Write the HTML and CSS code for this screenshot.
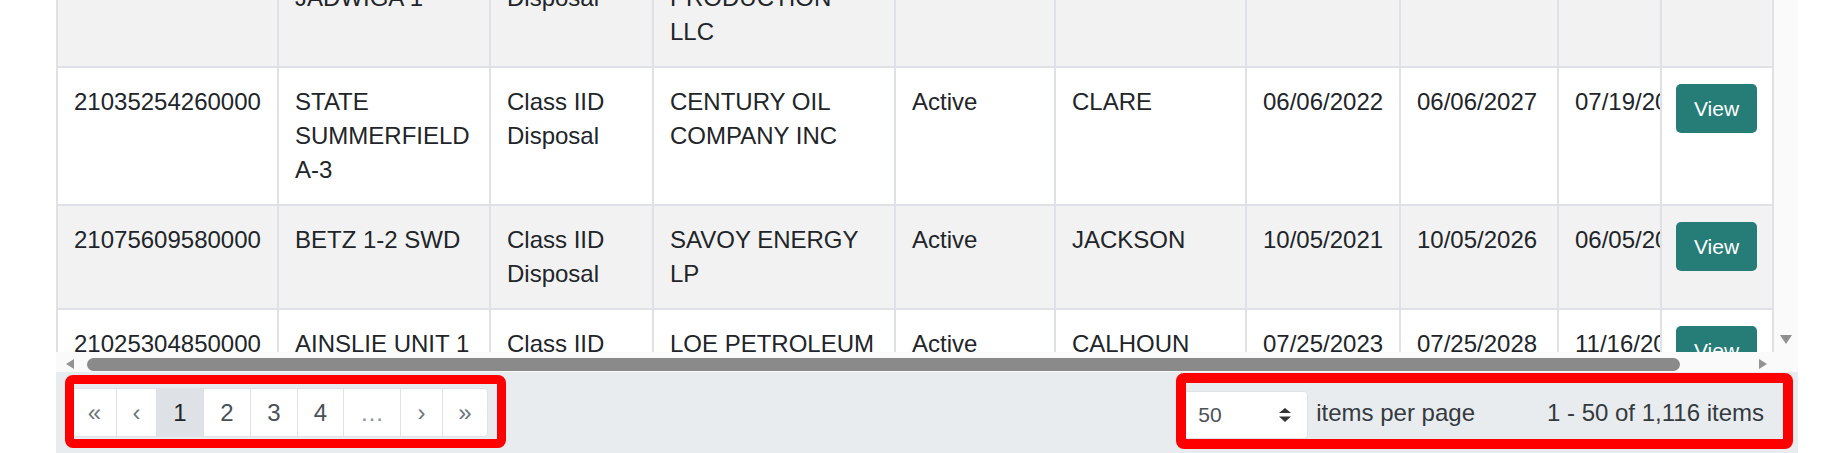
FILE: index.html
```html
<!DOCTYPE html>
<html lang="en">
<head>
<meta charset="utf-8">
<title>Wells</title>
<link rel="stylesheet" href="styles.css">
</head>
<body>
<div class="grid">
  <div class="grid-body">
    <div class="viewport">
      <div class="table">
        <div class="cell alt">21009509990000</div>
        <div class="cell alt">MAJEWSKI JADWIGA 1</div>
        <div class="cell alt">Class IID Disposal</div>
        <div class="cell alt">GRAND RIVER PRODUCTION LLC</div>
        <div class="cell alt">Active</div>
        <div class="cell alt">MANISTEE</div>
        <div class="cell alt">03/14/2022</div>
        <div class="cell alt">03/14/2027</div>
        <div class="cell alt clip">05/02/2023</div>
        <div class="cell alt cmd"><button class="btn-view" type="button">View</button></div>

        <div class="cell">21035254260000</div>
        <div class="cell">STATE SUMMERFIELD A-3</div>
        <div class="cell">Class IID Disposal</div>
        <div class="cell">CENTURY OIL COMPANY INC</div>
        <div class="cell">Active</div>
        <div class="cell">CLARE</div>
        <div class="cell">06/06/2022</div>
        <div class="cell">06/06/2027</div>
        <div class="cell clip">07/19/2023</div>
        <div class="cell cmd"><button class="btn-view" type="button">View</button></div>

        <div class="cell alt">21075609580000</div>
        <div class="cell alt">BETZ 1-2 SWD</div>
        <div class="cell alt">Class IID Disposal</div>
        <div class="cell alt">SAVOY ENERGY LP</div>
        <div class="cell alt">Active</div>
        <div class="cell alt">JACKSON</div>
        <div class="cell alt">10/05/2021</div>
        <div class="cell alt">10/05/2026</div>
        <div class="cell alt clip">06/05/2023</div>
        <div class="cell alt cmd"><button class="btn-view" type="button">View</button></div>

        <div class="cell">21025304850000</div>
        <div class="cell">AINSLIE UNIT 1</div>
        <div class="cell">Class IID Disposal</div>
        <div class="cell">LOE PETROLEUM CORPORATION</div>
        <div class="cell">Active</div>
        <div class="cell">CALHOUN</div>
        <div class="cell">07/25/2023</div>
        <div class="cell">07/25/2028</div>
        <div class="cell clip">11/16/2023</div>
        <div class="cell cmd"><button class="btn-view" type="button">View</button></div>
      </div>
    </div>
    <div class="vscroll"><span class="arrow-down"></span></div>
  </div>
  <div class="hscroll">
    <span class="hs-left"></span>
    <span class="hs-thumb"></span>
    <span class="hs-fill"></span>
    <span class="hs-right"></span>
    <span class="hs-corner"></span>
  </div>
  <div class="pager">
    <div class="pages">
      <span class="pg arrow w-first">&laquo;</span>
      <span class="pg arrow w-prev">&lsaquo;</span>
      <span class="pg active w-num">1</span>
      <span class="pg w-num">2</span>
      <span class="pg w-num">3</span>
      <span class="pg w-num4">4</span>
      <span class="pg more w-more">&hellip;</span>
      <span class="pg arrow w-next">&rsaquo;</span>
      <span class="pg arrow w-last">&raquo;</span>
    </div>
    <div class="size-select">
      <span>50</span>
      <svg class="spin" width="12" height="14" viewBox="0 0 12 14"><polygon points="0,5 6,0 12,5" fill="#333"/><polygon points="0,8.5 12,8.5 6,14" fill="#333"/></svg>
    </div>
    <span class="per-page">items per page</span>
    <span class="info">1 - 50 of 1,116 items</span>
  </div>
</div>
<div class="mark mark-pages"></div>
<div class="mark mark-info"></div>
</body>
</html>
```

FILE: styles.css
```css
* { box-sizing: border-box; }
html, body { margin: 0; padding: 0; background: #ffffff; }
body {
  width: 1825px;
  height: 453px;
  overflow: hidden;
  position: relative;
  font-family: "Liberation Sans", Arial, sans-serif;
  color: #212529;
}
.grid { margin-left: 56px; width: 1742px; }
.grid-body { display: flex; height: 352px; }
.viewport { width: 1718px; height: 352px; overflow: hidden; }
.table {
  display: grid;
  grid-template-columns: 221px 212px 163px 242px 160px 191px 154px 158px 103px 112px;
  width: 1718px;
  margin-top: -70px;
  border-left: 2px solid #dee2e6;
}
.cell {
  padding: 17px 16px;
  border-right: 2px solid #dee2e6;
  border-bottom: 2px solid #dee2e6;
  background: #ffffff;
  font-size: 24px;
  line-height: 34px;
}
.cell.alt { background: #f2f2f2; }
.cell.clip { white-space: nowrap; overflow: hidden; }
.cell.cmd { padding: 16px 14px; }
.btn-view {
  display: block;
  width: 81px;
  height: 49px;
  padding: 0;
  border: 0;
  border-radius: 5px;
  background: #267d77;
  color: #ffffff;
  font-family: "Liberation Sans", Arial, sans-serif;
  font-size: 21px;
  line-height: 49px;
  text-align: center;
}
.vscroll {
  width: 24px;
  height: 352px;
  background: #fafafa;
  display: flex;
  flex-direction: column;
  justify-content: flex-end;
  align-items: center;
  padding-bottom: 8px;
}
.arrow-down {
  width: 0; height: 0;
  border-left: 6px solid transparent;
  border-right: 6px solid transparent;
  border-top: 9px solid #8f8f8f;
}
.hscroll {
  display: flex;
  align-items: center;
  height: 20px;
  padding-top: 4px;
  background: #fafafa;
}
.hs-left {
  width: 0; height: 0;
  margin-left: 10px;
  border-top: 5.5px solid transparent;
  border-bottom: 5.5px solid transparent;
  border-right: 8px solid #939393;
}
.hs-thumb {
  width: 1593px;
  height: 13px;
  margin-left: 13px;
  border-radius: 7px;
  background: #8a8a8a;
}
.hs-fill { flex: 1; }
.hs-right {
  width: 0; height: 0;
  margin-right: 7px;
  border-top: 5.5px solid transparent;
  border-bottom: 5.5px solid transparent;
  border-left: 8px solid #939393;
}
.hs-corner { width: 24px; }
.pager {
  display: flex;
  align-items: center;
  height: 81px;
  padding: 0 34px 0 16px;
  background: #e9ecef;
}
.pages { display: flex; }
.pg {
  display: flex;
  align-items: center;
  justify-content: center;
  height: 49px;
  margin-left: -1px;
  border: 1px solid #dee2e6;
  background: #ffffff;
  color: #495057;
  font-size: 24px;
}
.pg:first-child { margin-left: 0; border-radius: 4px 0 0 4px; }
.pg:last-child { border-radius: 0 4px 4px 0; }
.pg.arrow { color: #6c757d; }
.pg.more { color: #8a9096; }
.pg.active { background: #dee2e6; color: #212529; }
.w-first { width: 45px; }
.w-prev { width: 41px; }
.w-num { width: 48px; }
.w-num4 { width: 47px; }
.w-more { width: 58px; }
.w-next { width: 43px; }
.w-last { width: 46px; }
.size-select {
  margin-left: auto;
  margin-top: 4px;
  width: 125px;
  height: 48px;
  display: flex;
  align-items: center;
  justify-content: space-between;
  padding: 0 16px 0 14px;
  background: #ffffff;
  border: 1px solid #dee2e6;
  border-radius: 4px;
  font-size: 21px;
  color: #495057;
}
.spin { display: block; }
.per-page { margin-left: 8px; font-size: 24px; color: #343a40; }
.info { margin-left: 72px; font-size: 24px; color: #343a40; }
.mark {
  position: absolute;
  border: 9px solid #ff0000;
  border-radius: 8px;
  pointer-events: none;
}
.mark-pages { left: 65px; top: 375px; width: 441px; height: 73px; }
.mark-info { left: 1176px; top: 373px; width: 617px; height: 76px; border-width: 10px; }
```
